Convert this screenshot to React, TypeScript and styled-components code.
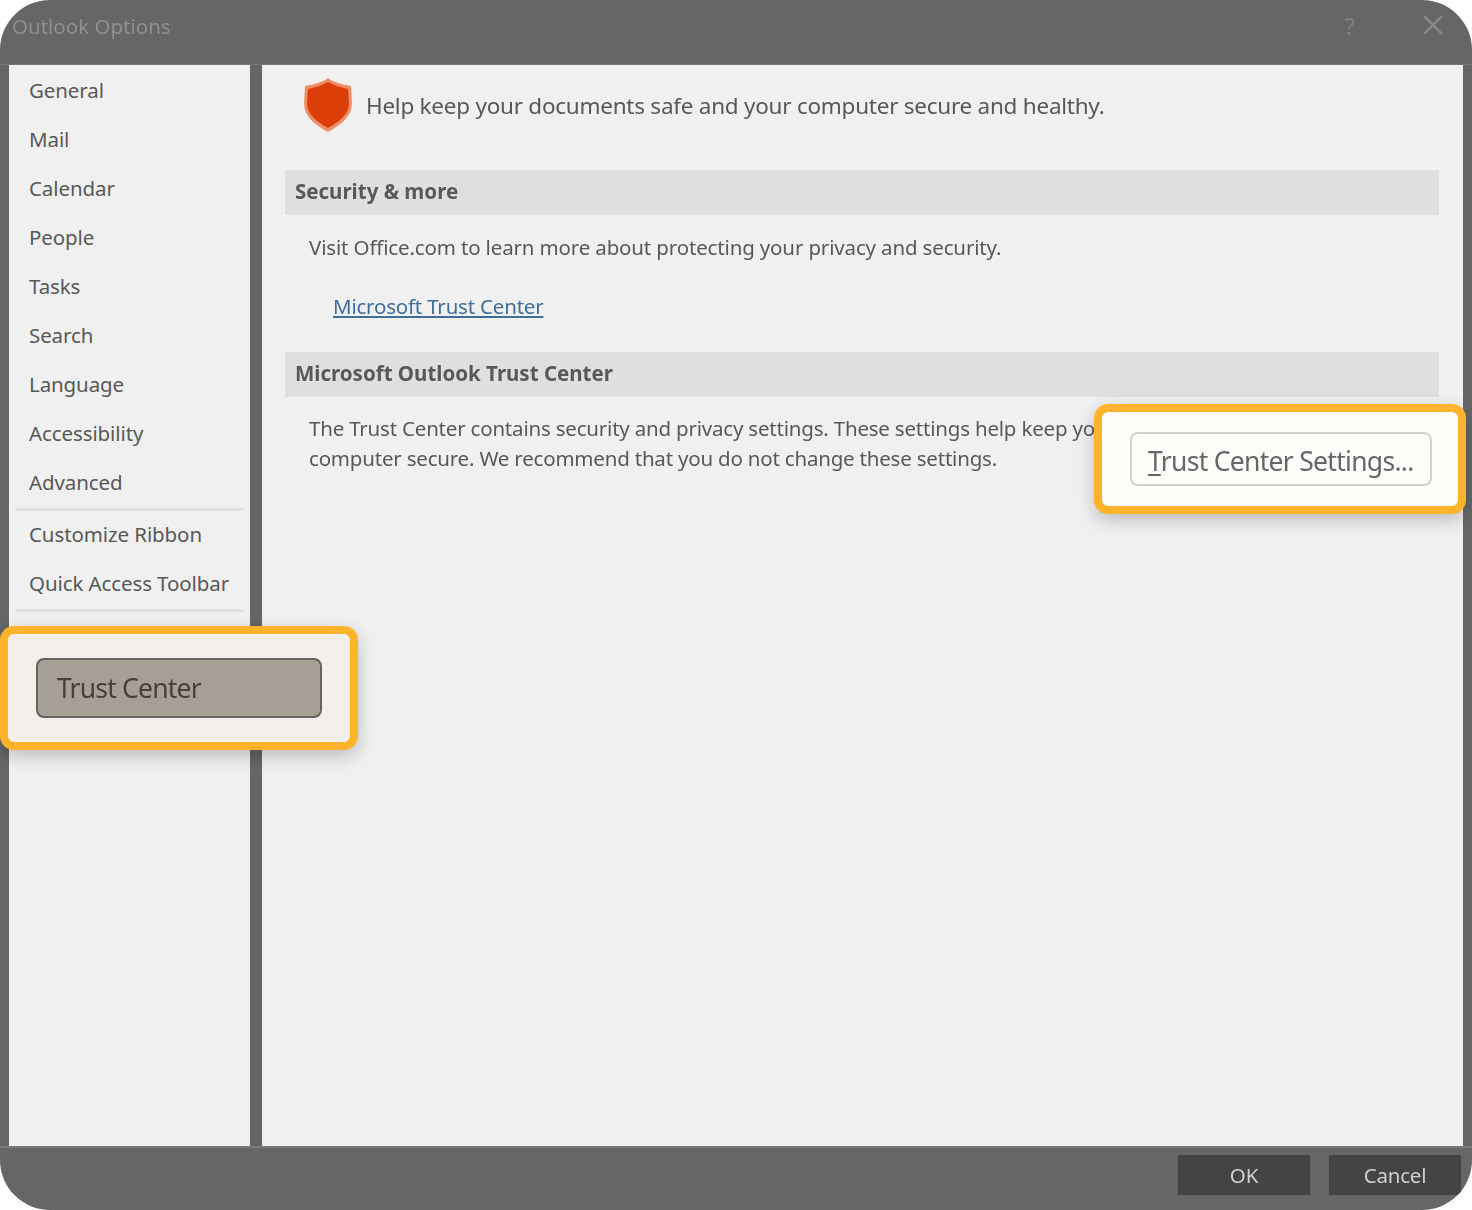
import React from "react"
import styled, { createGlobalStyle } from "styled-components"

// outlook options dialog, trust center page

const FONT = `"Noto Sans", "Open Sans", "Liberation Sans", sans-serif`
const NAV_TOP = ["General", "Mail", "Calendar", "People", "Tasks", "Search", "Language", "Accessibility", "Advanced"]
const NAV_MID = ["Customize Ribbon", "Quick Access Toolbar"]

const Global = createGlobalStyle`
	html, body {
		margin: 0;
		padding: 0;
		background: #fff;
	}
	* {
		box-sizing: border-box;
	}
`

const Page = styled.div`
	position: relative;
	width: 1472px;
	height: 1210px;
	font-family: ${FONT};
	overflow: hidden;
`

const Dialog = styled.div`
	width: 100%;
	height: 100%;
	display: flex;
	flex-direction: column;
	background: #666666;
	border-radius: 50px;
	overflow: hidden;
	filter: blur(0.55px);
`

const TitleBar = styled.div`
	height: 65px;
	flex: none;
	display: flex;
	align-items: center;
	padding: 0 28px 0 12px;
	border-bottom: 1px solid #777;
`

const Title = styled.div`
	flex: 1;
	font-size: 20.5px;
	color: #8f8f8f;
	margin-top: -13px;
`

const HelpMark = styled.div`
	font-size: 24px;
	color: #7f7f7f;
	margin: -13px 67px 0 0;
`

const CloseIcon = styled.svg`
	margin-top: -14px;
`

const Body = styled.div`
	flex: 1;
	min-height: 0;
	display: flex;
	gap: 12px;
	padding: 0 9px;
`

const Sidebar = styled.nav`
	width: 241px;
	flex: none;
	background: #f0f0f0;
	padding: 1px 6px 0;
`

const NavItem = styled.div`
	height: 49px;
	display: flex;
	align-items: center;
	padding: 0 0 2px 14px;
	font-size: 20.5px;
	letter-spacing: -0.1px;
	color: #585858;
`

const NavRule = styled.div`
	height: 3px;
	margin: 1px 0 -1px;
	background: #e0e0e0;
`

const Main = styled.main`
	flex: 1;
	background: #f0f0f0;
	padding: 0 24px 0 23px;
`

const Hero = styled.div`
	height: 105px;
	display: flex;
	align-items: center;
	padding: 0 0 24px 18px;
	gap: 13px;
	font-size: 22.5px;
	letter-spacing: -0.25px;
	color: #585858;
`

const ShieldIcon = styled.svg`
	flex: none;
	margin-top: -2px;
`

const SectionHeader = styled.div`
	height: 45px;
	display: flex;
	align-items: center;
	padding: 0 0 4px 10px;
	background: #dfdfdf;
	font-size: 20.5px;
	font-weight: 700;
	color: #585858;
`

const Para = styled.div<{ $top: number; $spacing: number }>`
	padding-left: 24px;
	margin-top: ${(p) => p.$top}px;
	font-size: 20.5px;
	letter-spacing: ${(p) => p.$spacing}px;
	line-height: 30px;
	color: #585858;
`

const TrustLink = styled.a`
	display: block;
	margin: 29px 0 31px 48px;
	font-size: 20.5px;
	letter-spacing: -0.2px;
	line-height: 30px;
	color: #3d6f9e;
	text-decoration: underline;
`

const Footer = styled.div`
	height: 64px;
	flex: none;
	display: flex;
	justify-content: flex-end;
	gap: 19px;
	padding: 7px 11px 15px 0;
	border-top: 2px solid #7a7a7a;
`

const FooterButton = styled.div`
	width: 132px;
	display: flex;
	align-items: center;
	justify-content: center;
	background: #444444;
	color: #d0d0d0;
	font-size: 20.5px;
	letter-spacing: -0.2px;
`

const Callout = styled.div<{ $left: number; $top: number; $w: number; $h: number; $bg: string }>`
	position: absolute;
	left: ${(p) => p.$left}px;
	top: ${(p) => p.$top}px;
	width: ${(p) => p.$w}px;
	height: ${(p) => p.$h}px;
	display: flex;
	align-items: center;
	background: ${(p) => p.$bg};
	border: 8px solid #fdb32b;
	border-radius: 14px;
	box-shadow: 0 6px 18px rgba(0, 0, 0, 0.22);
`

const SelectedNav = styled.div`
	width: 286px;
	height: 60px;
	margin-left: 28px;
	display: flex;
	align-items: center;
	padding-left: 19px;
	background: #a59f95;
	border: 2px solid #66625d;
	border-radius: 8px;
	font-size: 26.5px;
	letter-spacing: -0.8px;
	color: #45403b;
	filter: blur(0.55px);
`

const SettingsButton = styled.div`
	width: 302px;
	height: 54px;
	margin-left: 28px;
	display: flex;
	align-items: center;
	padding: 3px 0 0 16px;
	background: #fefdf9;
	border: 2px solid #d2d0cc;
	border-radius: 8px;
	font-size: 26.5px;
	letter-spacing: -0.7px;
	color: #666;
	filter: blur(0.55px);
	u {
		text-underline-offset: 3px;
	}
`

function Shield() {
	return (
		<ShieldIcon width="50" height="54" viewBox="0 0 50 54">
			<path d="M25 0 C30 4 38 6 48 8 L49 26 C49 38 38 47 25 54 C12 47 1 38 1 26 L2 8 C12 6 20 4 25 0 Z" fill="#ee8f6c" />
			<path d="M25 4 C30 7 37 9 45 11 L46 26 C46 36 36 44 25 50 C14 44 4 36 4 26 L5 11 C13 9 20 7 25 4 Z" fill="#dc3e08" />
		</ShieldIcon>
	)
}

function CloseMark() {
	return (
		<CloseIcon width="22" height="22" viewBox="0 0 22 22">
			<path d="M2 2 L20 20 M20 2 L2 20" stroke="#8a8a8a" strokeWidth="2.4" />
		</CloseIcon>
	)
}

export default function App() {
	return (
		<Page>
			<Global />
			<Dialog>
				<TitleBar>
					<Title>Outlook Options</Title>
					<HelpMark>?</HelpMark>
					<CloseMark />
				</TitleBar>
				<Body>
					<Sidebar>
						{NAV_TOP.map((n) => (
							<NavItem key={n}>{n}</NavItem>
						))}
						<NavRule />
						{NAV_MID.map((n) => (
							<NavItem key={n}>{n}</NavItem>
						))}
						<NavRule />
					</Sidebar>
					<Main>
						<Hero>
							<Shield />
							Help keep your documents safe and your computer secure and healthy.
						</Hero>
						<SectionHeader>Security &amp; more</SectionHeader>
						<Para $top={17} $spacing={-0.15}>
							Visit Office.com to learn more about protecting your privacy and security.
						</Para>
						<TrustLink>Microsoft Trust Center</TrustLink>
						<SectionHeader>Microsoft Outlook Trust Center</SectionHeader>
						<Para $top={16} $spacing={-0.2}>
							The Trust Center contains security and privacy settings. These settings help keep your documents safe and your
							<br />
							computer secure. We recommend that you do not change these settings.
						</Para>
					</Main>
				</Body>
				<Footer>
					<FooterButton>OK</FooterButton>
					<FooterButton>Cancel</FooterButton>
				</Footer>
			</Dialog>
			<Callout $left={0} $top={626} $w={358} $h={124} $bg="#f3f0ec">
				<SelectedNav>Trust Center</SelectedNav>
			</Callout>
			<Callout $left={1094} $top={404} $w={372} $h={110} $bg="#fefdf9">
				<SettingsButton>
					<span>
						<u>T</u>rust Center Settings...
					</span>
				</SettingsButton>
			</Callout>
		</Page>
	)
}
